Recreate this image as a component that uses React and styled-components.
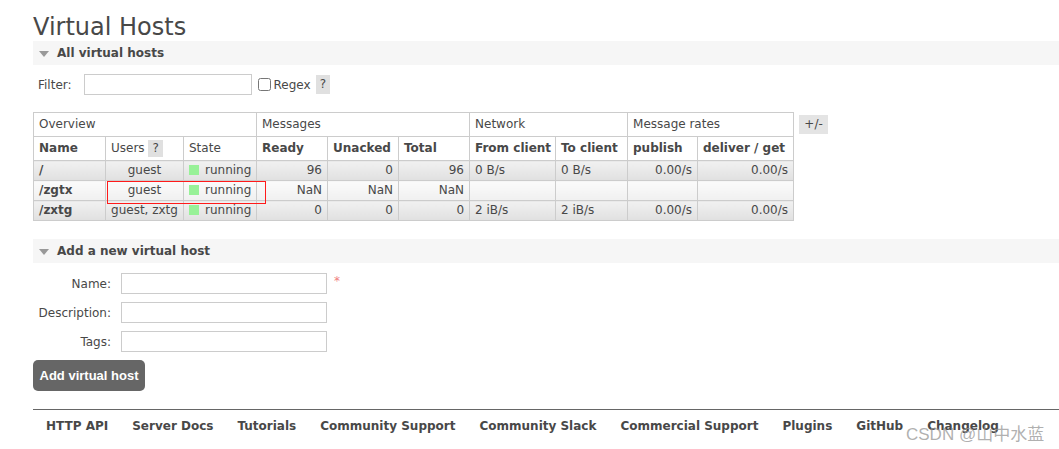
import React from "react";
import styled, { createGlobalStyle } from "styled-components";

const GlobalStyle = createGlobalStyle`
  body {
    margin: 0;
    background: #fff;
    font: 12px "DejaVu Sans", Verdana, sans-serif;
    color: #484848;
  }
  * { box-sizing: border-box; }
`;

const Page = styled.div`
  position: relative;
  width: 1059px;
  height: 449px;
  overflow: hidden;
  padding: 13px 0 0 33px;
`;

const Title = styled.h1`
  margin: 0;
  font-size: 24px;
  font-weight: normal;
  line-height: 28px;
  color: #484848;
`;

const SectionBar = styled.div`
  display: flex;
  align-items: center;
  height: 24px;
  margin-top: ${(p) => p.top || 0}px;
  background: #f6f6f6;
  font-weight: bold;
  color: #484848;
`;

const Arrow = styled.span`
  width: 0;
  height: 0;
  margin: 1px 8px 0 6px;
  border-left: 5.5px solid transparent;
  border-right: 5.5px solid transparent;
  border-top: 6px solid #999;
`;

const FilterRow = styled.div`
  display: flex;
  align-items: center;
  margin-top: 9px;
  padding-left: 5px;
  height: 21px;
`;

const TextInput = styled.input`
  width: ${(p) => p.w}px;
  height: 21px;
  border: 1px solid #ccc;
  padding: 1px 3px;
  font: inherit;
  margin: 0;
`;

const Check = styled.input`
  width: 13px;
  height: 13px;
  margin: 0 3px 0 6px;
`;

const Help = styled.span`
  display: inline-block;
  background: #e0e0e0;
  color: #484848;
  padding: ${(p) => (p.tall ? "2px 4px" : "1px 4px")};
  line-height: 15px;
  margin: ${(p) => (p.tall ? "0" : "-1px 0")};
  margin-left: ${(p) => p.ml || 0}px;
`;

const TableWrap = styled.div`
  position: relative;
  display: flex;
  align-items: flex-start;
  margin-top: 17px;
`;

const Table = styled.table`
  border-collapse: collapse;
  table-layout: fixed;
  width: 760px;
  font-size: 12px;
`;

const Th = styled.th`
  border: 1px solid #ccc;
  padding: 4px 5px;
  height: 24px;
  line-height: 15px;
  text-align: left;
  font-weight: ${(p) => (p.group || p.light ? "normal" : "bold")};
  white-space: nowrap;
  background: #fff;
`;

const Td = styled.td`
  border: 1px solid #ccc;
  padding: 2px 5px;
  height: 20px;
  line-height: 15px;
  white-space: nowrap;
  text-align: ${(p) => p.align || "left"};
  font-weight: ${(p) => (p.bold ? "bold" : "normal")};
  background: ${(p) =>
    p.alt
      ? "linear-gradient(to bottom, #fbfbfb 0%, #f0f0f0 100%)"
      : "linear-gradient(to bottom, #f1f1f1 0%, #e0e0e0 100%)"};
`;

const StateDot = styled.span`
  display: inline-block;
  width: 10px;
  height: 10px;
  background: #98f198;
  margin-right: 6px;
  vertical-align: -1px;
`;

const Toggle = styled.span`
  display: inline-block;
  margin: 3px 0 0 5px;
  width: 29px;
  height: 19px;
  line-height: 19px;
  text-align: center;
  background: #e4e4e4;
`;

const Annotation = styled.div`
  position: absolute;
  z-index: 2;
  left: 74px;
  top: 69px;
  width: 159px;
  height: 23px;
  border: 1px solid #ff1a1a;
  pointer-events: none;
`;

const Form = styled.div`
  display: grid;
  grid-template-columns: 78px 206px auto;
  column-gap: 10px;
  row-gap: 8px;
  align-items: center;
  margin-top: 10px;
`;

const Label = styled.label`
  text-align: right;
`;

const Required = styled.span`
  color: #f08080;
  font-size: 12px;
  margin-left: -3px;
  align-self: start;
  padding-top: 1px;
`;

const Button = styled.button`
  margin-top: 8px;
  width: 112px;
  height: 31px;
  border: none;
  border-radius: 5px;
  background: #666;
  color: #fff;
  font: bold 13px "Liberation Sans", Arial, sans-serif;
  padding: 0;
`;

const Footer = styled.div`
  display: flex;
  gap: 24px;
  margin-top: 18px;
  border-top: 1px solid #666;
  padding: 9px 0 0 13px;
  font-weight: bold;
  line-height: 15px;
`;

const FooterLink = styled.span`
  color: #484848;
`;

const Watermark = styled.div`
  position: absolute;
  left: 906px;
  top: 420px;
  font: 17px "Liberation Sans", "Noto Sans CJK SC", sans-serif;
  color: rgba(150, 150, 150, 0.75);
  white-space: nowrap;
`;

const hosts = [
  { name: "/", users: "guest", ready: "96", unacked: "0", total: "96", from: "0 B/s", to: "0 B/s", pub: "0.00/s", del: "0.00/s" },
  { name: "/zgtx", users: "guest", ready: "NaN", unacked: "NaN", total: "NaN", from: "", to: "", pub: "", del: "" },
  { name: "/zxtg", users: "guest, zxtg", ready: "0", unacked: "0", total: "0", from: "2 iB/s", to: "2 iB/s", pub: "0.00/s", del: "0.00/s" },
];

const widths = [72, 78, 73, 71, 71, 71, 86, 72, 70, 96];

const links = [
  "HTTP API",
  "Server Docs",
  "Tutorials",
  "Community Support",
  "Community Slack",
  "Commercial Support",
  "Plugins",
  "GitHub",
  "Changelog",
];

export default function App() {
  return (
    <Page>
      <GlobalStyle />
      <Title>Virtual Hosts</Title>
      <SectionBar>
        <Arrow />
        All virtual hosts
      </SectionBar>
      <FilterRow>
        Filter:
        <TextInput w={168} style={{ marginLeft: 12 }} />
        <Check type="checkbox" />
        Regex
        <Help tall ml={5}>?</Help>
      </FilterRow>

      <TableWrap>
        <Table>
          <colgroup>
            {widths.map((w, i) => (
              <col key={i} style={{ width: w }} />
            ))}
          </colgroup>
          <thead>
            <tr>
              <Th group colSpan={3}>Overview</Th>
              <Th group colSpan={3}>Messages</Th>
              <Th group colSpan={2}>Network</Th>
              <Th group colSpan={2}>Message rates</Th>
            </tr>
            <tr>
              <Th>Name</Th>
              <Th light>
                Users <Help>?</Help>
              </Th>
              <Th light>State</Th>
              <Th>Ready</Th>
              <Th>Unacked</Th>
              <Th>Total</Th>
              <Th>From client</Th>
              <Th>To client</Th>
              <Th>publish</Th>
              <Th>deliver / get</Th>
            </tr>
          </thead>
          <tbody>
            {hosts.map((h, i) => {
              const alt = i % 2 === 1;
              return (
                <tr key={h.name}>
                  <Td alt={alt} bold>{h.name}</Td>
                  <Td alt={alt} align="center">{h.users}</Td>
                  <Td alt={alt}>
                    <StateDot />
                    running
                  </Td>
                  <Td alt={alt} align="right">{h.ready}</Td>
                  <Td alt={alt} align="right">{h.unacked}</Td>
                  <Td alt={alt} align="right">{h.total}</Td>
                  <Td alt={alt}>{h.from}</Td>
                  <Td alt={alt}>{h.to}</Td>
                  <Td alt={alt} align="right">{h.pub}</Td>
                  <Td alt={alt} align="right">{h.del}</Td>
                </tr>
              );
            })}
          </tbody>
        </Table>
        <Toggle>+/-</Toggle>
        <Annotation />
      </TableWrap>

      <SectionBar top={18}>
        <Arrow />
        Add a new virtual host
      </SectionBar>
      <Form>
        <Label>Name:</Label>
        <TextInput w={206} />
        <Required>*</Required>
        <Label>Description:</Label>
        <TextInput w={206} />
        <span />
        <Label>Tags:</Label>
        <TextInput w={206} />
        <span />
      </Form>
      <Button>Add virtual host</Button>

      <Footer>
        {links.map((l) => (
          <FooterLink key={l}>{l}</FooterLink>
        ))}
      </Footer>
      <Watermark>CSDN @山中水蓝</Watermark>
    </Page>
  );
}
